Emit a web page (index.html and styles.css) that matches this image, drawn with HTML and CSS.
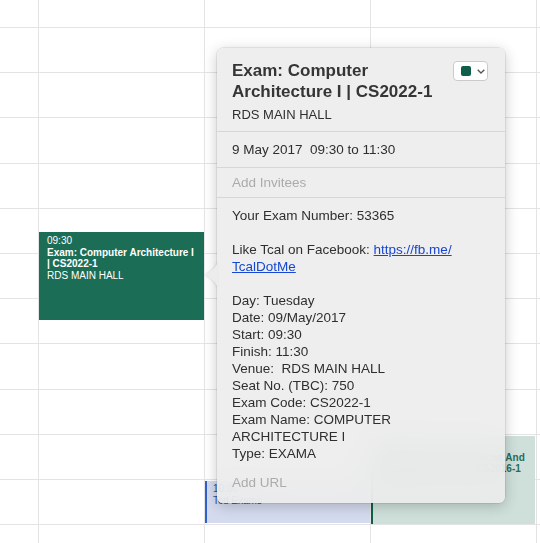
FILE: index.html
```html
<!DOCTYPE html>
<html lang="en">
<head>
<meta charset="utf-8">
<title>Calendar</title>
<link rel="stylesheet" href="styles.css">
</head>
<body>
<div class="cal">
  <div class="hours">
    <div class="hr h28"></div>
    <div class="hr"></div>
    <div class="hr"></div>
    <div class="hr h46"></div>
    <div class="hr"></div>
    <div class="hr"></div>
    <div class="hr"></div>
    <div class="hr"></div>
    <div class="hr h46"></div>
    <div class="hr"></div>
    <div class="hr"></div>
    <div class="hr"></div>
    <div class="hr last"></div>
  </div>
  <div class="days">
    <div class="day"></div>
    <div class="day">
      <div class="ev ev-exam">
        <div>09:30</div>
        <div class="ev-title">Exam: Computer Architecture I | CS2022-1</div>
        <div>RDS MAIN HALL</div>
      </div>
    </div>
    <div class="day">
      <div class="ev ev-blue">
        <div>10:00</div>
        <div>Tcd Exams</div>
      </div>
    </div>
    <div class="day">
      <div class="ev ev-mint">
        <div class="ev-time">15:00</div>
        <div class="ev-title">Exam: Operating Systems And<br>Database Systems | CS2016-1</div>
      </div>
    </div>
    <div class="day end"></div>
  </div>

  <div class="popover">
    <svg class="arrow" width="13" height="32" viewBox="0 0 13 32"><path d="M13 0 C13 5 10.5 8.5 6.5 11.5 L1.3 15.2 Q0.3 16 1.3 16.8 L6.5 20.5 C10.5 23.5 13 27 13 32 Z"/></svg>
    <div class="pop-head">
      <div class="pop-titles">
        <div class="pop-title">Exam: Computer Architecture I | CS2022-1</div>
        <div class="pop-loc">RDS MAIN HALL</div>
      </div>
      <div class="color-pick">
        <span class="swatch"></span>
        <svg class="chev" width="8" height="5" viewBox="0 0 8 5"><path d="M0.7 0.7 L4 4 L7.3 0.7"/></svg>
      </div>
    </div>
    <div class="pop-sec">9 May 2017&nbsp; 09:30 to 11:30</div>
    <div class="pop-sec muted invitees">Add Invitees</div>
    <div class="pop-notes">
      Your Exam Number: 53365<br>
      <br>
      Like Tcal on Facebook: <a href="#">https://fb.me/<wbr>TcalDotMe</a><br>
      <br>
      Day: Tuesday<br>
      Date: 09/May/2017<br>
      Start: 09:30<br>
      Finish: 11:30<br>
      Venue:&nbsp; RDS MAIN HALL<br>
      Seat No. (TBC): 750<br>
      Exam Code: CS2022-1<br>
      Exam Name: COMPUTER ARCHITECTURE I<br>
      Type: EXAMA
    </div>
    <div class="pop-url muted">Add URL</div>
  </div>
</div>
</body>
</html>
```

FILE: styles.css
```css
* { box-sizing: border-box; }

html, body {
  margin: 0;
  padding: 0;
  background: #ffffff;
  overflow: hidden;
}

body {
  font-family: "Liberation Sans", Arial, sans-serif;
  color: #2f2f2f;
}

.cal {
  position: relative;
  width: 540px;
  height: 543px;
  display: grid;
  grid-template-columns: 1fr;
  grid-template-rows: 1fr;
}

.hours,
.days {
  grid-area: 1 / 1;
}

.hours {
  display: flex;
  flex-direction: column;
}

.hr {
  height: 45px;
  border-bottom: 1px solid #e4e4e4;
  flex: none;
}

.hr.h28 { height: 28px; }
.hr.h46 { height: 46px; }
.hr.last { flex: 1; border-bottom: none; }

.days {
  display: grid;
  grid-template-columns: 39px 166px 166px 166px 1fr;
}

.day {
  border-right: 1px solid #e4e4e4;
  display: flex;
  flex-direction: column;
  min-width: 0;
}

.day.end { border-right: none; }

.ev {
  font-size: 10px;
  line-height: 11.5px;
  overflow: hidden;
}

.ev-title { font-weight: bold; }

.ev-exam {
  margin-top: 232px;
  height: 88px;
  background: #1b6d55;
  color: #ffffff;
  padding: 3px 8px 0 8px;
  margin-right: 0;
}

.ev-blue {
  margin-top: 481px;
  height: 42px;
  background: #d5dbef;
  border-left: 2px solid #2f61cf;
  color: #2c4f9d;
  padding: 2px 6px 0 6px;
}

.ev-mint {
  margin-top: 436px;
  height: 88px;
  margin-right: 1px;
  background: #cfe0da;
  border-left: 2px solid #0f5e4b;
  color: #286b60;
  padding: 4px 0 0 6px;
  white-space: nowrap;
}

/* Popover */
.popover {
  position: absolute;
  left: 217px;
  top: 48px;
  width: 288px;
  height: 455px;
  border-radius: 6px;
  background: rgba(236, 236, 236, 0.9);
  -webkit-backdrop-filter: blur(18px);
  backdrop-filter: blur(18px);
  box-shadow: 0 0 0 0.5px rgba(0, 0, 0, 0.14), 0 3px 14px rgba(0, 0, 0, 0.22);
  font-size: 13.5px;
  line-height: 17px;
  color: #2f2f2f;
}

.arrow {
  position: absolute;
  left: -12px;
  top: 211px;
  fill: #ececec;
  filter: drop-shadow(-1px 0 1px rgba(0, 0, 0, 0.12));
}

.pop-head {
  display: flex;
  align-items: flex-start;
  gap: 8px;
  padding: 12px 17px 8px 15px;
  border-bottom: 1px solid #d6d6d6;
}

.pop-titles { flex: 1; min-width: 0; }

.pop-title {
  font-size: 17px;
  line-height: 21px;
  font-weight: bold;
  color: #353535;
}

.pop-loc {
  margin-top: 4px;
  font-size: 13px;
  line-height: 17px;
}

.color-pick {
  flex: none;
  margin-top: 1px;
  width: 35px;
  height: 20px;
  background: #ffffff;
  border: 1px solid #cbcbcb;
  border-radius: 4px;
  display: flex;
  align-items: center;
  padding-left: 7px;
  gap: 6px;
}

.swatch {
  width: 10px;
  height: 10px;
  border-radius: 2px;
  background: #0f5e4a;
}

.chev {
  fill: none;
  stroke: #555555;
  stroke-width: 1.3;
}

.pop-sec {
  padding: 9px 15px;
  border-bottom: 1px solid #d6d6d6;
}

.pop-sec.invitees { padding: 6px 15px; }

.muted { color: #ababab; }

.pop-notes {
  padding: 9px 15px 0 15px;
}

.pop-notes a {
  color: #1747d1;
  text-decoration: underline;
}

.pop-url {
  margin-top: 12px;
  padding: 0 15px;
}
```
